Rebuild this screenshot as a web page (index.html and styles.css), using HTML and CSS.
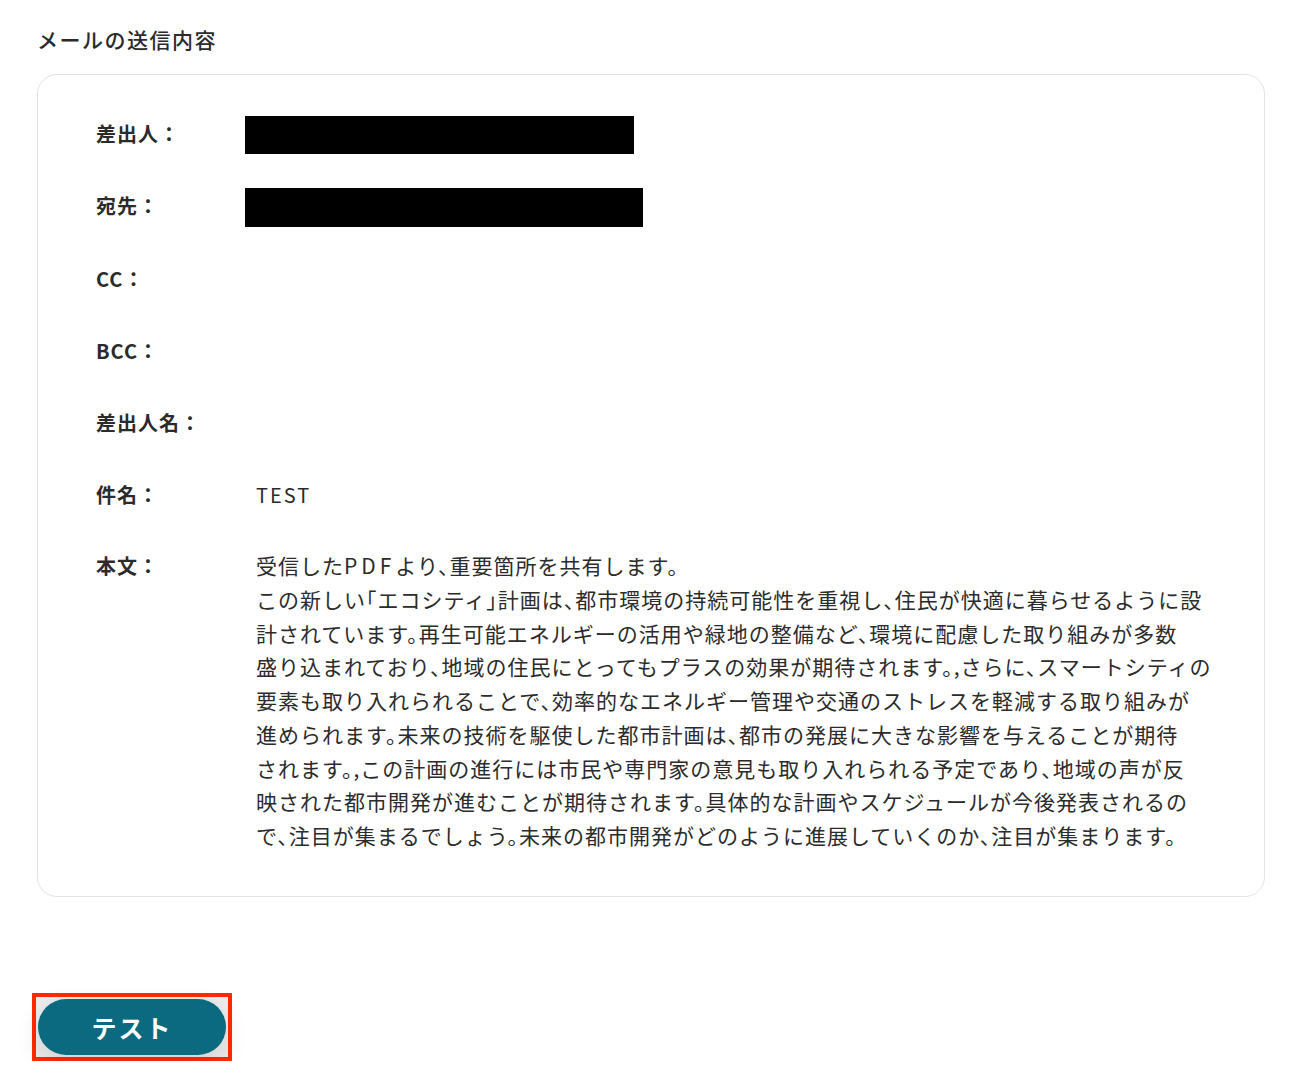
FILE: index.html
```html
<!DOCTYPE html>
<html lang="ja">
<head>
    <meta charset="UTF-8">
    <meta name="viewport" content="width=device-width, initial-scale=1.0">
    <title>メールの送信内容</title>
    <link rel="stylesheet" href="styles.css">
</head>
<body>
    <div class="page">
        <div class="section-title">メールの送信内容</div>
        <div class="mail-card">
            <div class="mail-row">
                <div class="mail-label">差出人：</div>
                <div class="mail-value"><span class="redacted redacted-from"></span></div>
            </div>
            <div class="mail-row">
                <div class="mail-label">宛先：</div>
                <div class="mail-value"><span class="redacted redacted-to"></span></div>
            </div>
            <div class="mail-row">
                <div class="mail-label">CC：</div>
                <div class="mail-value"></div>
            </div>
            <div class="mail-row">
                <div class="mail-label">BCC：</div>
                <div class="mail-value"></div>
            </div>
            <div class="mail-row">
                <div class="mail-label">差出人名：</div>
                <div class="mail-value"></div>
            </div>
            <div class="mail-row">
                <div class="mail-label">件名：</div>
                <div class="mail-value subject">TEST</div>
            </div>
            <div class="mail-row body-row">
                <div class="mail-label">本文：</div>
                <div class="mail-value mail-body">受信した<span class="latin">PDF</span>より、重要箇所を共有します。<br>この新しい「エコシティ」計画は、都市環境の持続可能性を重視し、住民が快適に暮らせるように設<br>計されています。再生可能エネルギーの活用や緑地の整備など、環境に配慮した取り組みが多数<br>盛り込まれており、地域の住民にとってもプラスの効果が期待されます。,さらに、スマートシティの<br>要素も取り入れられることで、効率的なエネルギー管理や交通のストレスを軽減する取り組みが<br>進められます。未来の技術を駆使した都市計画は、都市の発展に大きな影響を与えることが期待<br>されます。,この計画の進行には市民や専門家の意見も取り入れられる予定であり、地域の声が反<br>映された都市開発が進むことが期待されます。具体的な計画やスケジュールが今後発表されるの<br>で、注目が集まるでしょう。未来の都市開発がどのように進展していくのか、注目が集まります。</div>
            </div>
        </div>

        <div class="actions">
            <div class="highlight">
                <button class="test-btn">テスト</button>
            </div>
        </div>
    </div>
</body>
</html>
```

FILE: styles.css
```css
body {
    margin: 0;
    background: #fff;
    color: #2b2b2b;
    font-family: "Noto Sans CJK JP", "Noto Sans", sans-serif;
}

.page {
    padding: 24px 29px 0 37px;
}

.section-title {
    font-size: 21px;
    font-weight: 500;
    line-height: 30px;
    letter-spacing: 1.5px;
    margin-bottom: 20px;
}

.mail-card {
    border: 1px solid #e3e3e3;
    border-radius: 20px;
    padding: 41px 40px 43px 58px;
    display: flex;
    flex-direction: column;
    gap: 34px;
}

.mail-row {
    display: flex;
    align-items: center;
    min-height: 38px;
}

.mail-label {
    width: 160px;
    flex-shrink: 0;
    padding-bottom: 4px;
    font-size: 20px;
    font-weight: 700;
    letter-spacing: 1px;
}

.mail-value {
    font-size: 21px;
    letter-spacing: 1px;
    font-feature-settings: "halt";
}

.subject {
    font-size: 20px;
    letter-spacing: 2px;
    padding-bottom: 4px;
}

.latin {
    letter-spacing: 4px;
}

.redacted {
    display: block;
    height: 38px;
    margin-left: -11px;
    background: #000;
}

.redacted-from {
    width: 389px;
}

.redacted-to {
    width: 398px;
    height: 39px;
}

.body-row {
    align-items: flex-start;
}

.body-row .mail-label {
    line-height: 34px;
    padding-bottom: 0;
}

.mail-body {
    line-height: 33.75px;
    white-space: nowrap;
}

.actions {
    margin-top: 96px;
    margin-left: -5px;
}

.highlight {
    display: inline-block;
    border: 4px solid #ff2a00;
    padding: 2px;
    background: #ececec;
}

.test-btn {
    display: block;
    width: 188px;
    height: 56px;
    border: none;
    border-radius: 28px;
    background: #0b6a80;
    color: #fff;
    font-family: inherit;
    font-size: 25px;
    font-weight: 700;
    letter-spacing: 2px;
    box-shadow: 0 8px 24px rgba(0, 0, 0, 0.12);
}
```
